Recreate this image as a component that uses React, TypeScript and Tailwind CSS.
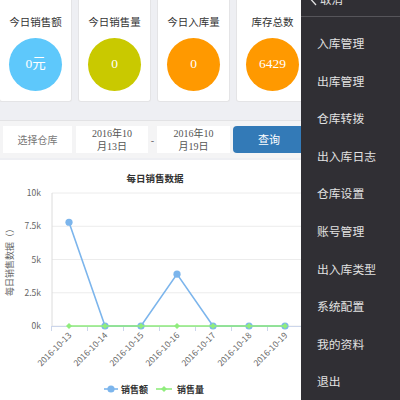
import React from "react";

const cards = [
  { title: "今日销售额", value: "0元", color: "bg-[#5ec8fb]" },
  { title: "今日销售量", value: "0", color: "bg-[#c9c900]" },
  { title: "今日入库量", value: "0", color: "bg-[#ff9900]" },
  { title: "库存总数", value: "6429", color: "bg-[#ff9900]" },
];

const menu = ["入库管理", "出库管理", "仓库转拨", "出入库日志", "仓库设置", "账号管理", "出入库类型", "系统配置", "我的资料", "退出"];

const dates = ["2016-10-13", "2016-10-14", "2016-10-15", "2016-10-16", "2016-10-17", "2016-10-18", "2016-10-19"];
const sales = [7800, 0, 0, 3900, 0, 0, 0];

function Chart() {
  const y0 = 166;
  const h = 133;
  const xs = dates.map((_, i) => 69 + 36 * i);
  const ys = sales.map((v) => y0 - (v / 10000) * h);
  const grid = [0, 1, 2, 3, 4].map((i) => y0 - i * (h / 4));
  const ylabels = ["0k", "2.5k", "5k", "7.5k", "10k"];
  const font = "'Noto Sans CJK SC', 'Liberation Sans', sans-serif";
  return (
    <svg width="301" height="240" viewBox="0 0 301 240" style={{ fontFamily: font }}>
      <text x="155" y="22" textAnchor="middle" fontSize="9.5" fontWeight="bold" fill="#333">每日销售数据</text>
      {grid.map((g, i) => (
        <line key={i} x1="52" x2="304" y1={g} y2={g} stroke="#ececec" strokeWidth="1" />
      ))}
      {ylabels.map((l, i) => (
        <text key={l} x="41" y={grid[i] + 3} textAnchor="end" fontSize="8.5" fill="#666">{l}</text>
      ))}
      <line x1="52" x2="52" y1="33" y2="166" stroke="#dcdcdc" />
      <line x1="52" x2="304" y1="166.5" y2="166.5" stroke="#ccd6eb" />
      {[0, 1, 2, 3, 4, 5, 6, 7].map((i) => (
        <line key={i} x1={51.5 + 36 * i} x2={51.5 + 36 * i} y1="166" y2="171" stroke="#ccd6eb" />
      ))}
      <text transform="translate(13 100) rotate(-90)" textAnchor="middle" fontSize="9" fill="#666">每日销售数据（）</text>
      {dates.map((d, i) => (
        <text key={d} transform={`translate(${xs[i] + 3} 176) rotate(-45)`} textAnchor="end" fontSize="8.5" fill="#666">{d}</text>
      ))}
      <polyline points={xs.map((x, i) => `${x},${ys[i]}`).join(" ")} fill="none" stroke="#7cb5ec" strokeWidth="1.6" />
      {xs.map((x, i) => (
        <circle key={i} cx={x} cy={ys[i]} r="3.6" fill="#7cb5ec" />
      ))}
      <line x1={xs[0]} x2={xs[6]} y1={y0} y2={y0} stroke="#90ed7d" strokeWidth="1.6" />
      {xs.map((x, i) => (
        <polygon key={i} points={`${x},${y0 - 3} ${x + 3},${y0} ${x},${y0 + 3} ${x - 3},${y0}`} fill="#90ed7d" />
      ))}
      <line x1="104" x2="118" y1="229" y2="229" stroke="#7cb5ec" strokeWidth="1.6" />
      <circle cx="111" cy="229" r="3.6" fill="#7cb5ec" />
      <text x="121" y="232.5" fontSize="9" fontWeight="bold" fill="#333">销售额</text>
      <line x1="156" x2="172" y1="229" y2="229" stroke="#90ed7d" strokeWidth="1.6" />
      <polygon points="164,226 167,229 164,232 161,229" fill="#90ed7d" />
      <text x="177" y="232.5" fontSize="9" fontWeight="bold" fill="#333">销售量</text>
    </svg>
  );
}

export default function App() {
  return (
    <div className="flex h-[400px] w-[400px] overflow-hidden bg-[#eeeff3] font-['Noto_Sans_CJK_SC',sans-serif]">
      <div className="w-[301px] shrink-0 overflow-hidden">
        <div className="-ml-[1px] flex h-[102px] w-[330px] gap-[6px]">
          {cards.map((c) => (
            <div key={c.title} className="flex h-[102px] w-[73px] shrink-0 flex-col items-center rounded-b-[3px] border border-t-0 border-[#e4e4e6] bg-white">
              <div className="mt-[14px] text-[10.5px] leading-[16px] text-[#333]">{c.title}</div>
              <div className={`mt-[8px] flex h-[53px] w-[53px] items-center justify-center rounded-full ${c.color} font-['Liberation_Serif','Noto_Sans_CJK_SC',serif] text-[13.5px] text-white`}>
                {c.value}
              </div>
            </div>
          ))}
        </div>
        <div className="h-[18px]" />
        <div className="flex h-[38px] w-[320px] items-center border-t border-[#e2e2e4] bg-[#f4f4f5] pl-[3px]">
          <div className="flex h-[27px] w-[69px] shrink-0 items-center justify-center bg-white text-[10px] text-[#777]">选择仓库</div>
          <div className="ml-[4px] flex h-[27px] w-[72px] shrink-0 flex-col items-center justify-center bg-white font-['Liberation_Serif','Noto_Sans_CJK_SC',serif] text-[10px] leading-[13px] text-[#555]">
            <span>2016年10</span>
            <span>月13日</span>
          </div>
          <div className="flex w-[9px] shrink-0 justify-center text-[10px] text-[#555]">-</div>
          <div className="flex h-[27px] w-[73px] shrink-0 flex-col items-center justify-center bg-white font-['Liberation_Serif','Noto_Sans_CJK_SC',serif] text-[10px] leading-[13px] text-[#555]">
            <span>2016年10</span>
            <span>月19日</span>
          </div>
          <div className="ml-[3px] flex h-[27px] w-[72px] shrink-0 items-center justify-center rounded-[4px] bg-[#337ab7] text-[11px] text-white">查询</div>
        </div>
        <div className="mt-[2px] h-[242px] bg-white">
          <Chart />
        </div>
      </div>
      <div className="flex-1 bg-[#302f34] text-[#e2e2e2]">
        <div className="h-[17px] overflow-hidden border-b border-[#56555a]">
          <div className="-mt-[9px] flex h-[18px] items-center pl-[9px] text-[11.5px]">
            <svg width="8" height="12" viewBox="0 0 8 12" className="mr-[2px]">
              <polyline points="6,1 1.5,6 6,11" fill="none" stroke="#e2e2e2" strokeWidth="1.3" />
            </svg>
            <span>取消</span>
          </div>
        </div>
        <div className="pt-[7px]">
          {menu.map((m) => (
            <div key={m} className="flex h-[37.6px] items-center pl-[16px] text-[11.8px]">{m}</div>
          ))}
        </div>
      </div>
    </div>
  );
}
